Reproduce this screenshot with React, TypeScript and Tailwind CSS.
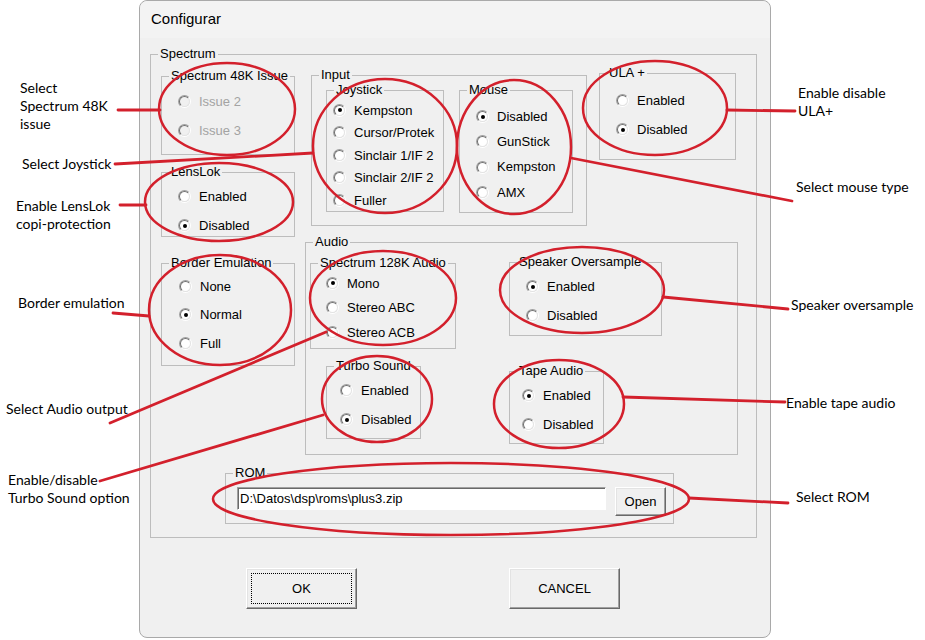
import React from 'react';

const RED = '#d3202c';

type RadioProps = { label: string; checked?: boolean; disabled?: boolean; row: string };

function Radio({ label, checked, disabled, row }: RadioProps) {
    return (
        <div className={`flex items-center gap-[8px] whitespace-nowrap ${row}`}>
            <span className="flex size-[13px] shrink-0 rounded-full border border-t-[#a0a0a0] border-l-[#a0a0a0] border-b-white border-r-white">
                <span
                    className={`flex size-full items-center justify-center rounded-full border border-t-[#6f6f6f] border-l-[#6f6f6f] border-b-[#e3e3e3] border-r-[#e3e3e3] ${disabled ? 'bg-[#f0f0f0]' : 'bg-white'}`}
                >
                    {checked && <span className="size-[4px] rounded-full bg-black"></span>}
                </span>
            </span>
            <span className={disabled ? 'text-[#a3a3a3]' : 'text-black'}>{label}</span>
        </div>
    );
}

type GroupProps = { title: string; box: string; children?: React.ReactNode };

function Group({ title, box, children }: GroupProps) {
    return (
        <div className={`relative shrink-0 border border-[#bdbdbd] ${box}`}>
            <span className="absolute left-[7px] top-[-9px] whitespace-nowrap bg-[#f0f0f0] px-[2px] leading-[16px]">{title}</span>
            {children}
        </div>
    );
}

const winButton =
    'flex items-center justify-center border border-t-white border-l-white border-b-[#696969] border-r-[#696969] bg-[#f0f0f0] shadow-[inset_-1px_-1px_0_#a0a0a0,inset_1px_1px_0_#e3e3e3]';

function Dialog() {
    return (
        <div className="flex h-[638px] w-[632px] shrink-0 flex-col rounded-[8px] border border-[#a9a9a9] bg-[#f0f0f0] text-[13px] text-black">
            <div className="flex h-[37px] items-center rounded-t-[8px] bg-[#f3f3f3] pl-[11px] text-[15px]">Configurar</div>

            <Group title="Spectrum" box="ml-[10px] mt-[16px] h-[484px] w-[607px]">
                <div className="flex flex-col pl-[10px] pt-[18px]">
                    <div className="flex items-start gap-[10px]">
                        <div className="mt-[3px] flex w-[134px] flex-col">
                            <Group title="Spectrum 48K Issue" box="h-[79px] w-[134px]">
                                <div className="flex flex-col pl-[16px] pt-[10px]">
                                    <Radio label="Issue 2" disabled row="h-[29px]" />
                                    <Radio label="Issue 3" disabled row="h-[29px]" />
                                </div>
                            </Group>
                            <Group title="LensLok" box="mt-[17px] h-[65px] w-[134px]">
                                <div className="flex flex-col pl-[16px] pt-[9px]">
                                    <Radio label="Enabled" row="h-[29px]" />
                                    <Radio label="Disabled" checked row="h-[29px]" />
                                </div>
                            </Group>
                            <Group title="Border Emulation" box="mt-[26px] h-[103px] w-[134px]">
                                <div className="flex flex-col pl-[17px] pt-[8px]">
                                    <Radio label="None" row="h-[28.5px]" />
                                    <Radio label="Normal" checked row="h-[28.5px]" />
                                    <Radio label="Full" row="h-[28.5px]" />
                                </div>
                            </Group>
                        </div>

                        <div className="flex flex-col">
                            <div className="flex items-start">
                                <Group title="Input" box="ml-[6px] mt-[2px] h-[151px] w-[276px]">
                                    <div className="flex items-start gap-[15px] pl-[14px] pt-[14px]">
                                        <Group title="Joystick" box="h-[122px] w-[118px]">
                                            <div className="flex flex-col pl-[6px] pt-[8px]">
                                                <Radio label="Kempston" checked row="h-[22.5px]" />
                                                <Radio label="Cursor/Protek" row="h-[22.5px]" />
                                                <Radio label="Sinclair 1/IF 2" row="h-[22.5px]" />
                                                <Radio label="Sinclair 2/IF 2" row="h-[22.5px]" />
                                                <Radio label="Fuller" row="h-[22.5px]" />
                                            </div>
                                        </Group>
                                        <Group title="Mouse" box="h-[123px] w-[114px]">
                                            <div className="flex flex-col pl-[16px] pt-[13px]">
                                                <Radio label="Disabled" checked row="h-[25.3px]" />
                                                <Radio label="GunStick" row="h-[25.3px]" />
                                                <Radio label="Kempston" row="h-[25.3px]" />
                                                <Radio label="AMX" row="h-[25.3px]" />
                                            </div>
                                        </Group>
                                    </div>
                                </Group>
                                <Group title="ULA +" box="ml-[12px] h-[87px] w-[137px]">
                                    <div className="flex flex-col pl-[16px] pt-[12px]">
                                        <Radio label="Enabled" row="h-[29px]" />
                                        <Radio label="Disabled" checked row="h-[29px]" />
                                    </div>
                                </Group>
                            </div>

                            <Group title="Audio" box="mt-[16px] h-[213px] w-[433px]">
                                <div className="flex items-start pl-[4px] pt-[20px]">
                                    <div className="flex w-[146px] flex-col">
                                        <Group title="Spectrum 128K Audio" box="h-[86px] w-[146px]">
                                            <div className="flex flex-col pl-[15px] pt-[7px]">
                                                <Radio label="Mono" checked row="h-[24.5px]" />
                                                <Radio label="Stereo ABC" row="h-[24.5px]" />
                                                <Radio label="Stereo ACB" row="h-[24.5px]" />
                                            </div>
                                        </Group>
                                        <Group title="Turbo Sound" box="ml-[16px] mt-[17px] h-[73px] w-[95px]">
                                            <div className="flex flex-col pl-[13px] pt-[9px]">
                                                <Radio label="Enabled" row="h-[29px]" />
                                                <Radio label="Disabled" checked row="h-[29px]" />
                                            </div>
                                        </Group>
                                    </div>
                                    <div className="ml-[53px] mt-[-1px] flex flex-col">
                                        <Group title="Speaker Oversample" box="h-[74px] w-[153px]">
                                            <div className="flex flex-col pl-[16px] pt-[9px]">
                                                <Radio label="Enabled" checked row="h-[29px]" />
                                                <Radio label="Disabled" row="h-[29px]" />
                                            </div>
                                        </Group>
                                        <Group title="Tape Audio" box="mt-[35px] h-[73px] w-[95px]">
                                            <div className="flex flex-col pl-[12px] pt-[9px]">
                                                <Radio label="Enabled" checked row="h-[29px]" />
                                                <Radio label="Disabled" row="h-[29px]" />
                                            </div>
                                        </Group>
                                    </div>
                                </div>
                            </Group>
                        </div>
                    </div>

                    <Group title="ROM" box="ml-[64px] mt-[18px] h-[51px] w-[449px]">
                        <div className="flex items-start gap-[9px] pl-[11px] pt-[13px]">
                            <div className="flex h-[23px] w-[369px] items-center border border-t-[#a0a0a0] border-l-[#a0a0a0] border-b-white border-r-white bg-white pl-[2px] shadow-[inset_1px_1px_0_#696969]">
                                {'D:\\Datos\\dsp\\roms\\plus3.zip'}
                            </div>
                            <div className={`h-[29px] w-[51px] ${winButton}`}>Open</div>
                        </div>
                    </Group>
                </div>
            </Group>

            <div className="mt-[30px] flex">
                <div className={`ml-[106px] h-[41px] w-[111px] p-[4px] ${winButton}`}>
                    <div className="flex size-full items-center justify-center border border-dotted border-black">OK</div>
                </div>
                <div className={`ml-[152px] h-[41px] w-[111px] ${winButton}`}>CANCEL</div>
            </div>
        </div>
    );
}

function Callouts() {
    return (
        <svg className="pointer-events-none absolute inset-0" width="925" height="640" viewBox="0 0 925 640" fill="none">
            <g stroke={RED} strokeWidth="2.5">
                <ellipse cx="227" cy="109" rx="68" ry="46" />
                <ellipse cx="219" cy="202" rx="74" ry="39" />
                <ellipse cx="385" cy="146" rx="72" ry="67" />
                <ellipse cx="514" cy="147" rx="57" ry="67" />
                <ellipse cx="655" cy="108" rx="72" ry="47" />
                <ellipse cx="220" cy="310" rx="71" ry="55" />
                <ellipse cx="383" cy="298" rx="73" ry="47" />
                <ellipse cx="377" cy="399" rx="55" ry="43" />
                <ellipse cx="582" cy="290" rx="82" ry="43" />
                <ellipse cx="559" cy="404" rx="65" ry="44" />
                <ellipse cx="451" cy="499" rx="238" ry="36" />
            </g>
            <g stroke={RED} strokeWidth="2.8" strokeLinecap="round">
                <line x1="118" y1="110" x2="160" y2="110" />
                <line x1="115" y1="164" x2="313" y2="153" />
                <line x1="120" y1="205" x2="146" y2="205" />
                <line x1="113" y1="313" x2="149" y2="316" />
                <line x1="110" y1="423" x2="326" y2="332" />
                <line x1="100" y1="481" x2="323" y2="415" />
                <line x1="727" y1="110" x2="795" y2="111" />
                <line x1="571" y1="158" x2="792" y2="201" />
                <line x1="663" y1="297" x2="788" y2="309" />
                <line x1="623" y1="397" x2="785" y2="402" />
                <line x1="689" y1="498" x2="788" y2="503" />
            </g>
        </svg>
    );
}

export default function App() {
    return (
        <div className="relative flex h-[640px] w-[925px] overflow-hidden bg-white font-['Liberation_Sans',Arial,sans-serif]">
            <aside className="flex w-[139px] shrink-0 flex-col font-['Lato',sans-serif] text-[14px] leading-[18px] text-black">
                <p className="ml-[20px] mt-[79px]">Select<br />Spectrum 48K<br />issue</p>
                <p className="ml-[22px] mt-[22px]">Select Joystick</p>
                <p className="ml-[16px] mt-[24px]">Enable LensLok<br />copi-protection</p>
                <p className="ml-[18px] mt-[61px]">Border emulation</p>
                <p className="ml-[6px] mt-[88px]">Select Audio output</p>
                <p className="ml-[8px] mt-[53px]">Enable/disable<br />Turbo Sound option</p>
            </aside>

            <Dialog />

            <aside className="flex flex-1 flex-col font-['Lato',sans-serif] text-[14px] leading-[18px] text-black">
                <p className="ml-[27px] mt-[84px]">Enable disable<br />ULA+</p>
                <p className="ml-[25px] mt-[58px]">Select mouse type</p>
                <p className="ml-[20px] mt-[100px]">Speaker oversample</p>
                <p className="ml-[15px] mt-[80px]">Enable tape audio</p>
                <p className="ml-[25px] mt-[76px]">Select ROM</p>
            </aside>

            <Callouts />
        </div>
    );
}
